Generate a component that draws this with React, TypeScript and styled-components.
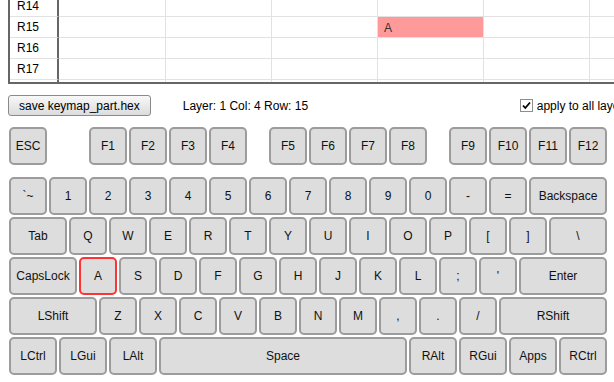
import React, { useLayoutEffect, useRef } from 'react';
import styled, { createGlobalStyle } from 'styled-components';

const UNIT = 40;
const ROW_H = 21;
const FIRST_VISIBLE_ROW = 14;

const GlobalStyle = createGlobalStyle`
  html {
    overflow: hidden;
  }
  body {
    margin: 0;
    background: #fff;
    color: #000;
    font-family: 'Liberation Sans', Arial, sans-serif;
    font-size: 12px;
  }
`;

const Page = styled.div`
  width: 614px;
  overflow: hidden;
  padding-left: 8px;
  box-sizing: border-box;
`;

/* keymap table */
const MapViewport = styled.div`
  width: 720px;
  height: 82px;
  overflow: hidden;
  border-left: 2px solid #666;
  border-bottom: 2px solid #666;
`;

const MapGrid = styled.div`
  display: grid;
  grid-template-columns: 49px 107px repeat(6, 106px);
  grid-auto-rows: ${ROW_H}px;
`;

const RowHead = styled.div`
  display: flex;
  align-items: center;
  padding-left: 7px;
  border-right: 2px solid #666;
  border-bottom: 1px solid #e2e2e2;
  box-sizing: border-box;
`;

const Cell = styled.div<{ $hit?: boolean }>`
  display: flex;
  align-items: center;
  padding: 1px 0 0 6px;
  border-right: 1px solid #e2e2e2;
  border-bottom: 1px solid #e2e2e2;
  box-sizing: border-box;
  background: ${({ $hit }) => ($hit ? '#ff9a9a' : '#fff')};
  color: #333;
`;

/* toolbar */
const Toolbar = styled.div`
  display: flex;
  align-items: center;
  margin-top: 11px;
  height: 21px;
  white-space: nowrap;
`;

const SaveButton = styled.button`
  flex: 0 0 auto;
  height: 21px;
  padding: 0 10px;
  border: 1px solid #8a8a8a;
  border-radius: 3px;
  background: linear-gradient(#f8f8f8, #dcdcdc);
  color: #000;
  font-family: 'Liberation Sans', Arial, sans-serif;
  font-size: 12px;
`;

const Info = styled.span`
  flex: 0 0 337px;
  margin-left: 32px;
`;

const ApplyLabel = styled.label`
  display: flex;
  align-items: center;
  gap: 4px;
  flex: 0 0 auto;
`;

const CheckBox = styled.span`
  display: inline-flex;
  align-items: center;
  justify-content: center;
  width: 13px;
  height: 13px;
  box-sizing: border-box;
  border: 1px solid #8e8e8e;
  background: #fff;
`;

/* keyboard */
const Keyboard = styled.div`
  display: flex;
  flex-direction: column;
  width: ${UNIT * 15}px;
  margin-top: 10px;
`;

const KeyRow = styled.div<{ $spaced?: boolean }>`
  display: flex;
  height: ${UNIT}px;
  margin-bottom: ${({ $spaced }) => ($spaced ? 10 : 0)}px;
`;

const Key = styled.div<{ $w: number; $active?: boolean }>`
  display: flex;
  align-items: center;
  justify-content: center;
  flex: 0 0 auto;
  width: ${({ $w }) => $w * UNIT - 2}px;
  height: ${UNIT - 2}px;
  margin: 1px;
  box-sizing: border-box;
  border: 2px solid ${({ $active }) => ($active ? '#f33' : '#9c9c9c')};
  border-radius: 5px;
  background: #dddddd;
  color: #111;
  font-size: 12px;
`;

const KeyGap = styled.div<{ $w: number }>`
  flex: 0 0 auto;
  width: ${({ $w }) => $w * UNIT}px;
`;

type KeyDef = [string, number] | number;

const fRow: KeyDef[] = [
  ['ESC', 1], 1,
  ['F1', 1], ['F2', 1], ['F3', 1], ['F4', 1], 0.5,
  ['F5', 1], ['F6', 1], ['F7', 1], ['F8', 1], 0.5,
  ['F9', 1], ['F10', 1], ['F11', 1], ['F12', 1],
];

const mainRows: KeyDef[][] = [
  [['`~', 1], ['1', 1], ['2', 1], ['3', 1], ['4', 1], ['5', 1], ['6', 1], ['7', 1], ['8', 1], ['9', 1], ['0', 1], ['-', 1], ['=', 1], ['Backspace', 2]],
  [['Tab', 1.5], ['Q', 1], ['W', 1], ['E', 1], ['R', 1], ['T', 1], ['Y', 1], ['U', 1], ['I', 1], ['O', 1], ['P', 1], ['[', 1], [']', 1], ['\\', 1.5]],
  [['CapsLock', 1.75], ['A', 1], ['S', 1], ['D', 1], ['F', 1], ['G', 1], ['H', 1], ['J', 1], ['K', 1], ['L', 1], [';', 1], ["'", 1], ['Enter', 2.25]],
  [['LShift', 2.25], ['Z', 1], ['X', 1], ['C', 1], ['V', 1], ['B', 1], ['N', 1], ['M', 1], [',', 1], ['.', 1], ['/', 1], ['RShift', 2.75]],
  [['LCtrl', 1.25], ['LGui', 1.25], ['LAlt', 1.25], ['Space', 6.25], ['RAlt', 1.25], ['RGui', 1.25], ['Apps', 1.25], ['RCtrl', 1.25]],
];

const renderRow = (keys: KeyDef[]) =>
  keys.map((k, i) =>
    typeof k === 'number' ? (
      <KeyGap key={i} $w={k} />
    ) : (
      <Key key={i} $w={k[1]} $active={k[0] === 'A'}>
        {k[0]}
      </Key>
    )
  );

const rows = Array.from({ length: 24 }, (_, i) => i);

const App = () => {
  const viewRef = useRef<HTMLDivElement>(null);

  useLayoutEffect(() => {
    if (viewRef.current) {
      viewRef.current.scrollTop = FIRST_VISIBLE_ROW * ROW_H + ROW_H - 1 - 16;
    }
  }, []);

  return (
    <Page>
      <GlobalStyle />
      <MapViewport ref={viewRef}>
        <MapGrid>
          {rows.map((r) => (
            <React.Fragment key={r}>
              <RowHead>R{r}</RowHead>
              {Array.from({ length: 7 }, (_, c) => {
                const hit = r === 15 && c === 3;
                return (
                  <Cell key={c} $hit={hit}>
                    {hit ? 'A' : ''}
                  </Cell>
                );
              })}
            </React.Fragment>
          ))}
        </MapGrid>
      </MapViewport>

      <Toolbar>
        <SaveButton type="button">save keymap_part.hex</SaveButton>
        <Info>Layer: 1 Col: 4 Row: 15</Info>
        <ApplyLabel>
          <CheckBox>
            <svg width="9" height="9" viewBox="0 0 9 9">
              <path d="M1 4.5 L3.3 7 L8 1.5" fill="none" stroke="#000" strokeWidth="1.8" />
            </svg>
          </CheckBox>
          apply to all layers
        </ApplyLabel>
      </Toolbar>

      <Keyboard>
        <KeyRow $spaced>{renderRow(fRow)}</KeyRow>
        {mainRows.map((row, i) => (
          <KeyRow key={i}>{renderRow(row)}</KeyRow>
        ))}
      </Keyboard>
    </Page>
  );
};

export default App;
